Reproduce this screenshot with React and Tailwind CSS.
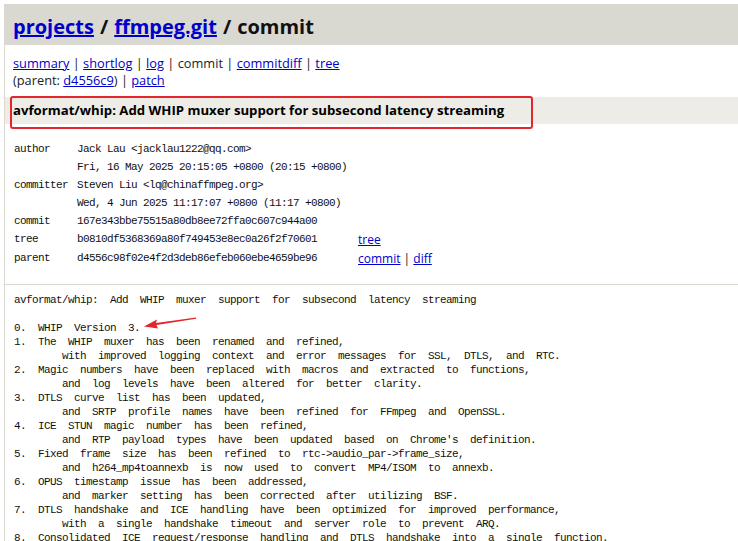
import React from "react";

const mono = "font-['Liberation_Mono',monospace] text-[11px] tracking-[-0.6px]";
const sans = "font-['Open_Sans','Noto_Sans',sans-serif]";
const link = "text-[#0000cc] underline";

const info = [
  ["author", "Jack Lau <jacklau1222@qq.com>", null],
  ["", "Fri, 16 May 2025 20:15:05 +0800 (20:15 +0800)", null],
  ["committer", "Steven Liu <lq@chinaffmpeg.org>", null],
  ["", "Wed, 4 Jun 2025 11:17:07 +0800 (11:17 +0800)", null],
  ["commit", "167e343bbe75515a80db8ee72ffa0c607c944a00", null],
  ["tree", "b0810df5368369a80f749453e8ec0a26f2f70601", "tree"],
  ["parent", "d4556c98f02e4f2d3deb86efeb060ebe4659be96", "parent"],
];

const message = [
  "avformat/whip: Add WHIP muxer support for subsecond latency streaming",
  "",
  "0. WHIP Version 3.",
  "1. The WHIP muxer has been renamed and refined,",
  "    with improved logging context and error messages for SSL, DTLS, and RTC.",
  "2. Magic numbers have been replaced with macros and extracted to functions,",
  "    and log levels have been altered for better clarity.",
  "3. DTLS curve list has been updated,",
  "    and SRTP profile names have been refined for FFmpeg and OpenSSL.",
  "4. ICE STUN magic number has been refined,",
  "    and RTP payload types have been updated based on Chrome's definition.",
  "5. Fixed frame size has been refined to rtc->audio_par->frame_size,",
  "    and h264_mp4toannexb is now used to convert MP4/ISOM to annexb.",
  "6. OPUS timestamp issue has been addressed,",
  "    and marker setting has been corrected after utilizing BSF.",
  "7. DTLS handshake and ICE handling have been optimized for improved performance,",
  "    with a single handshake timeout and server role to prevent ARQ.",
  "8. Consolidated ICE request/response handling and DTLS handshake into a single function.",
];

export default function App() {
  return (
    <div className="relative min-h-screen bg-white pt-[4px] pl-[4px] overflow-hidden">
      <div className="border-l border-[#d9d8d1] text-[#111]">
        <div className={`${sans} h-[41px] bg-[#d9d8d1] px-[8px] pt-[5px] flex items-center text-[20px] font-bold`}>
          <a className={link}>projects</a>
          <span className="mx-[6px]">/</span>
          <a className={link}>ffmpeg.git</a>
          <span className="mx-[6px]">/</span>
          <span>commit</span>
        </div>

        <div className={`${sans} px-[8px] pt-[10px] text-[12.8px] leading-[17px] text-[#222]`}>
          <div>
            <a className={link}>summary</a> | <a className={link}>shortlog</a> |{" "}
            <a className={link}>log</a> | commit | <a className={link}>commitdiff</a> |{" "}
            <a className={link}>tree</a>
          </div>
          <div>
            (parent: <a className={link}>d4556c9</a>) | <a className={link}>patch</a>
          </div>
        </div>

        <div className={`${sans} mt-[8px] h-[27px] bg-[#edece6] px-[8px] flex items-center text-[13.2px] font-bold text-black`}>
          avformat/whip: Add WHIP muxer support for subsecond latency streaming
        </div>

        <div className="mt-[16px] pl-[9px]">
          {info.map(([k, v, l], i) => (
            <div key={i} className={`flex items-center ${i >= 5 ? "h-[19px]" : "h-[18px]"}`}>
              <span className={`${mono} w-[63px] whitespace-pre`}>{k}</span>
              <span className={`${mono} w-[281px] whitespace-pre`}>{v}</span>
              {l === "tree" && <a className={`${sans} ${link} text-[12px]`}>tree</a>}
              {l === "parent" && (
                <span className={`${sans} text-[12px] text-[#222]`}>
                  <a className={link}>commit</a> | <a className={link}>diff</a>
                </span>
              )}
            </div>
          ))}
        </div>

        <div className="mt-[16px] border-t border-[#d9d8d1]" />

        <div className="pt-[8px] pl-[9px]">
          {message.map((line, i) => (
            <div key={i} className={`${mono} h-[14px] leading-[14px] whitespace-pre [word-spacing:6px]`}>
              {line}
            </div>
          ))}
        </div>
      </div>

      <div className="absolute left-[10px] top-[96px] w-[523px] h-[33px] border-2 border-[#e3262b] rounded-[3px]" />

      <svg className="absolute left-[140px] top-[313px]" width="60" height="18" viewBox="0 0 60 18">
        <path d="M4 13.5 L17 6.5 L16 10 L56 4.5 L56 5.8 L16.5 12 L18 15.5 Z" fill="#e3262b" />
      </svg>
    </div>
  );
}
